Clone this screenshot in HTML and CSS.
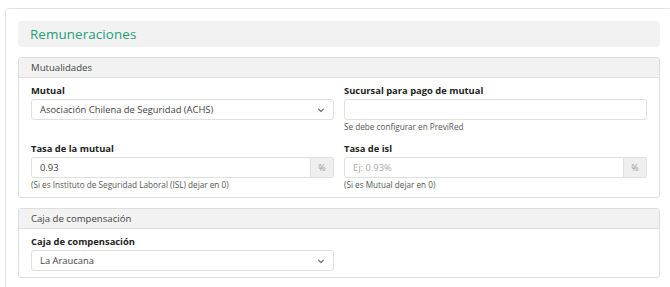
FILE: index.html
```html
<!DOCTYPE html>
<html lang="es">
<head>
<meta charset="utf-8">
<title>Remuneraciones</title>
<link rel="stylesheet" href="styles.css">
</head>
<body>
<div class="card">
  <div class="title-bar"><h2 class="title">Remuneraciones</h2></div>

  <section class="panel">
    <div class="panel-head">Mutualidades</div>
    <div class="panel-body grid">
      <div class="field">
        <label class="label">Mutual</label>
        <div class="select"><span>Asociación Chilena de Seguridad (ACHS)</span>
          <svg class="chev" width="8" height="6" viewBox="0 0 8 6"><path d="M1.2 1.8 L4 4.4 L6.8 1.8" fill="none" stroke="#666" stroke-width="1.1"/></svg>
        </div>
      </div>
      <div class="field">
        <label class="label">Sucursal para pago de mutual</label>
        <input class="input" type="text">
        <div class="help">Se debe configurar en PreviRed</div>
      </div>
      <div class="field">
        <label class="label">Tasa de la mutual</label>
        <div class="group">
          <input class="input grow" type="text" value="0.93">
          <span class="addon">%</span>
        </div>
        <div class="help">(Si es Instituto de Seguridad Laboral (ISL) dejar en 0)</div>
      </div>
      <div class="field">
        <label class="label">Tasa de isl</label>
        <div class="group">
          <input class="input grow" type="text" placeholder="Ej: 0.93%">
          <span class="addon">%</span>
        </div>
        <div class="help">(Si es Mutual dejar en 0)</div>
      </div>
    </div>
  </section>

  <section class="panel">
    <div class="panel-head">Caja de compensación</div>
    <div class="panel-body grid short">
      <div class="field">
        <label class="label">Caja de compensación</label>
        <div class="select"><span>La Araucana</span>
          <svg class="chev" width="8" height="6" viewBox="0 0 8 6"><path d="M1.2 1.8 L4 4.4 L6.8 1.8" fill="none" stroke="#666" stroke-width="1.1"/></svg>
        </div>
      </div>
    </div>
  </section>
</div>
</body>
</html>
```

FILE: styles.css
```css
* { box-sizing: border-box; }
html, body { margin: 0; padding: 0; background: #fff; }
body {
  font-family: "Open Sans", "Noto Sans", sans-serif;
  color: #333;
  overflow: hidden;
}
.card {
  margin: 8px 0 0 5px;
  width: 668px;
  height: 300px;
  border: 1px solid #e2e2e2;
  border-radius: 4px;
  padding: 12px 12px 0 12px;
}
.title-bar {
  height: 26px;
  background: #f2f2f2;
  border-radius: 4px;
  padding-left: 12px;
  display: flex;
  align-items: center;
}
.title {
  margin: 0;
  font-size: 13.4px;
  font-weight: 500;
  color: #22a07b;
  letter-spacing: 0.1px;
}
.panel {
  margin-top: 10px;
  border: 1px solid #dedede;
  border-radius: 3px;
  width: 642px;
}
.panel-head {
  height: 20px;
  background: #f2f2f2;
  border-bottom: 1px solid #e0e0e0;
  font-size: 9.6px;
  color: #444;
  padding-left: 12px;
  display: flex;
  align-items: center;
}
.panel-body { padding: 6px 12px 7px 12px; }
.grid {
  display: grid;
  grid-template-columns: 303px 303px;
  column-gap: 10px;
  row-gap: 10px;
}
.short { padding-top: 6px; padding-bottom: 6px; }
.field { display: flex; flex-direction: column; }
.label {
  font-size: 9.4px;
  font-weight: 700;
  color: #222;
  line-height: 14px;
  margin-bottom: 1px;
}
.select, .input {
  height: 21px;
  border: 1px solid #e0e0e0;
  border-radius: 3px;
  font-family: inherit;
  font-size: 9.4px;
  color: #444;
  background: #fff;
}
.select {
  display: flex;
  align-items: center;
  justify-content: space-between;
  padding: 0 8px 0 8px;
}
.chev { display: block; }
.input {
  padding: 0 8px;
  outline: none;
  width: 100%;
}
.input::placeholder { color: #aaa; }
.group { display: flex; }
.grow { flex: 1; border-radius: 3px 0 0 3px; min-width: 0; }
.addon {
  width: 23px;
  height: 21px;
  background: #efefef;
  border: 1px solid #e0e0e0;
  border-left: none;
  border-radius: 0 3px 3px 0;
  font-size: 9px;
  color: #999;
  display: flex;
  align-items: center;
  justify-content: center;
}
.help {
  font-size: 8.2px;
  color: #555;
  line-height: 10px;
  margin-top: 2px;
}
```
